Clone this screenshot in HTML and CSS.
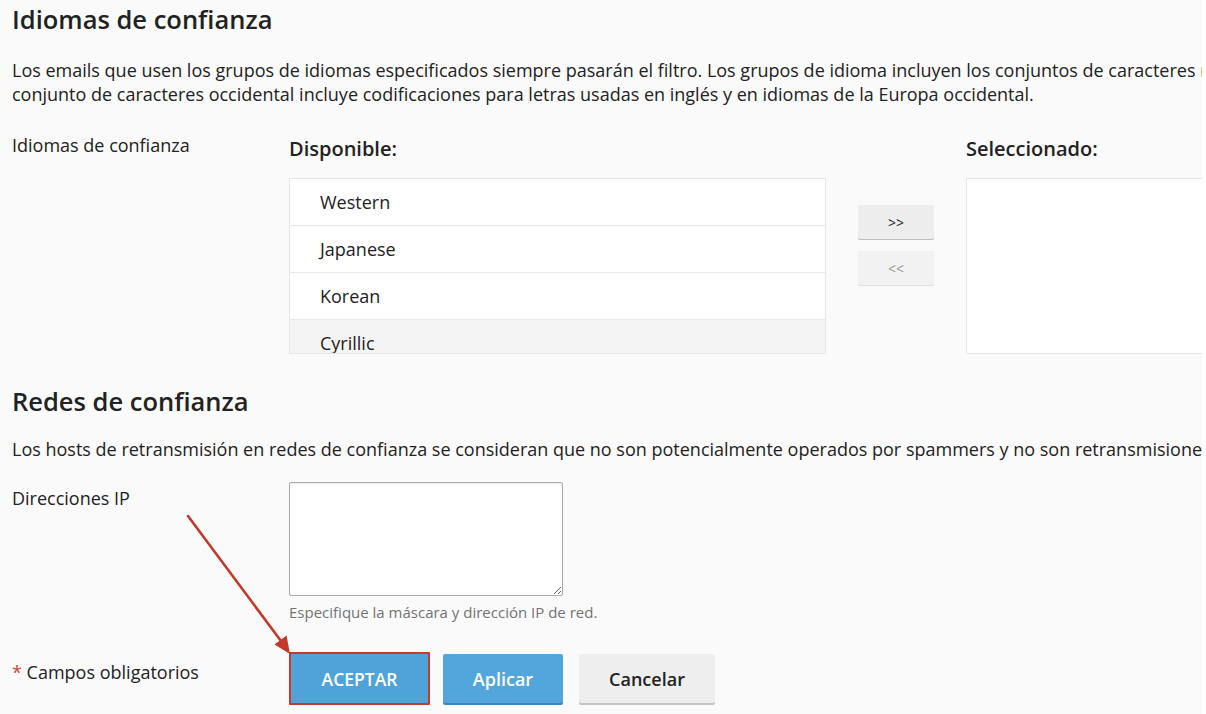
FILE: index.html
```html
<!DOCTYPE html>
<html lang="es">
<head>
<meta charset="utf-8">
<title>Idiomas de confianza</title>
<link rel="stylesheet" href="styles.css">
</head>
<body>
<div class="page">
  <div class="content">
    <h2 class="section-title">Idiomas de confianza</h2>
    <p class="desc">Los emails que usen los grupos de idiomas especificados siempre pasarán el filtro. Los grupos de idioma incluyen los conjuntos de caracteres nacionales. Por ejemplo, el<br>conjunto de caracteres occidental incluye codificaciones para letras usadas en inglés y en idiomas de la Europa occidental.</p>

    <div class="form-row lang-row">
      <div class="field-label">Idiomas de confianza</div>
      <div class="dual">
        <div class="dual-col">
          <div class="col-title">Disponible:</div>
          <ul class="list">
            <li class="item">Western</li>
            <li class="item">Japanese</li>
            <li class="item">Korean</li>
            <li class="item item-hover">Cyrillic</li>
            <li class="item">Greek</li>
          </ul>
        </div>
        <div class="mover">
          <button class="move-btn" type="button">&gt;&gt;</button>
          <button class="move-btn" type="button" disabled>&lt;&lt;</button>
        </div>
        <div class="dual-col">
          <div class="col-title">Seleccionado:</div>
          <ul class="list"></ul>
        </div>
      </div>
    </div>

    <h2 class="section-title second">Redes de confianza</h2>
    <p class="desc nowrap">Los hosts de retransmisión en redes de confianza se consideran que no son potencialmente operados por spammers y no son retransmisiones abiertas.</p>

    <div class="form-row ip-row">
      <div class="field-label">Direcciones IP</div>
      <div class="field">
        <textarea class="ip-input"></textarea>
        <div class="hint">Especifique la máscara y dirección IP de red.</div>
      </div>
    </div>

    <div class="form-row actions-row">
      <div class="field-label required"><span class="star">*</span> Campos obligatorios</div>
      <div class="actions">
        <button class="btn btn-primary btn-marked" type="button">ACEPTAR</button>
        <button class="btn btn-primary" type="button">Aplicar</button>
        <button class="btn btn-default" type="button">Cancelar</button>
      </div>
    </div>
  </div>

  <svg class="annotation" width="1202" height="714" viewBox="0 0 1202 714">
    <line x1="188" y1="516" x2="281" y2="641" stroke="#c33a2b" stroke-width="2.6" stroke-linecap="round"/>
    <polygon points="290,654 274.5,644.5 286.5,635.5" fill="#c33a2b"/>
  </svg>
</div>
</body>
</html>
```

FILE: styles.css
```css
html, body {
  margin: 0;
  padding: 0;
  background: #ffffff;
}

.page {
  position: relative;
  width: 1202px;
  height: 714px;
  overflow: hidden;
  background: #fafafa;
  font-family: "Open Sans", "Liberation Sans", sans-serif;
  color: #222222;
}

.content {
  width: 1700px;
  padding: 3px 0 0 12px;
}

.section-title {
  margin: 0;
  font-size: 25.5px;
  line-height: 32px;
  font-weight: 600;
  color: #222222;
}

.section-title.second {
  margin-top: 31px;
}

.desc {
  margin: 23px 0 0 0;
  font-size: 18px;
  line-height: 24px;
  color: #222222;
}

.section-title.second + .desc {
  margin-top: 20px;
}

.nowrap {
  white-space: nowrap;
}

.form-row {
  display: grid;
  grid-template-columns: 277px auto;
  align-items: start;
}

.field-label {
  font-size: 18px;
  line-height: 24px;
}

.lang-row {
  margin-top: 24px;
}

.lang-row .field-label {
  padding-top: 3px;
}

.dual {
  display: flex;
  align-items: flex-start;
}

.dual-col {
  display: flex;
  flex-direction: column;
  width: 537px;
}

.col-title {
  font-size: 20px;
  line-height: 26px;
  font-weight: 600;
  margin-top: 6px;
  margin-bottom: 16px;
}

.list {
  list-style: none;
  margin: 0;
  padding: 0;
  height: 174px;
  overflow: hidden;
  background: #ffffff;
  border: 1px solid #e6e6e6;
}

.item {
  height: 46px;
  line-height: 46px;
  padding-left: 30px;
  font-size: 18px;
  color: #222222;
  border-bottom: 1px solid #e8e8e8;
}

.item-hover {
  background: #f4f4f4;
  line-height: 46px;
}

.mover {
  display: flex;
  flex-direction: column;
  gap: 12px;
  width: 76px;
  margin: 75px 32px 0 32px;
}

.move-btn {
  width: 76px;
  height: 34px;
  border: none;
  border-radius: 2px;
  background: #ededed;
  box-shadow: 0 1px 0 #bdbdbd;
  font-family: "Open Sans", "Liberation Sans", sans-serif;
  font-size: 14px;
  color: #222222;
  padding: 0;
}

.move-btn:disabled {
  background: #f2f2f2;
  color: #9a9a9a;
  box-shadow: 0 1px 0 #dedede;
}

.ip-row {
  margin-top: 21px;
}

.ip-row .field-label {
  padding-top: 4px;
}

.field {
  display: flex;
  flex-direction: column;
}

.ip-input {
  display: block;
  width: 274px;
  height: 114px;
  box-sizing: border-box;
  margin: 0;
  border: 1px solid #aaaaaa;
  border-radius: 2px;
  background: #ffffff;
  box-shadow: inset 0 1px 2px rgba(0, 0, 0, 0.08);
  font-family: "Open Sans", "Liberation Sans", sans-serif;
}

.hint {
  margin-top: 4px;
  font-size: 15px;
  line-height: 24px;
  color: #737373;
}

.actions-row {
  margin-top: 28px;
  align-items: center;
}

.required {
  margin-top: -14px;
}

.star {
  color: #d0463a;
}

.actions {
  display: flex;
  align-items: center;
}

.btn {
  height: 49px;
  border: none;
  border-radius: 2px;
  font-family: "Open Sans", "Liberation Sans", sans-serif;
  font-size: 18px;
  font-weight: 600;
  padding: 0;
}

.btn-primary {
  background: #52a6dc;
  color: #ffffff;
  box-shadow: 0 2px 0 #3b87bb;
  width: 120px;
  margin-right: 16px;
}

.btn-marked {
  width: 141px;
  height: 53px;
  border: 2px solid #c63a2c;
  border-radius: 1px;
  box-shadow: none;
  background: #4fa3d9;
  margin-right: 13px;
  font-size: 17.5px;
}

.btn-default {
  width: 136px;
  background: #eeeeee;
  color: #222222;
  box-shadow: 0 2px 0 #c4c4c4;
}

.annotation {
  position: absolute;
  left: 0;
  top: 0;
  pointer-events: none;
}
```
